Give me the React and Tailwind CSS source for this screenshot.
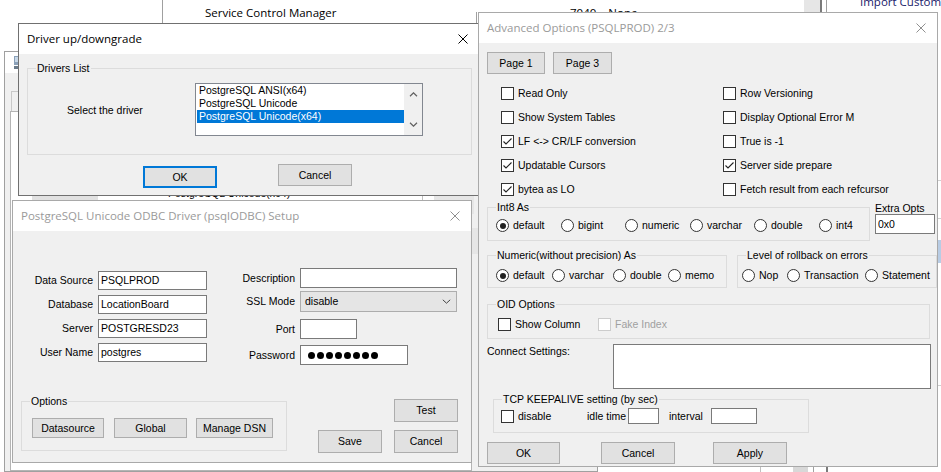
import React from "react";

function CloseX({ active }) {
  return (
    <svg width="10" height="10" viewBox="0 0 10 10" className="shrink-0">
      <path d="M0.5 0.5L9.5 9.5M9.5 0.5L0.5 9.5" stroke={active ? "#000000" : "#8f8f8f"} strokeWidth="1" fill="none" />
    </svg>
  );
}

function Win({ className, title, active, children }) {
  return (
    <div
      className={
        "absolute flex flex-col bg-[#f0f0f0] border " +
        (active ? "border-[#707070] " : "border-[#a9a9a9] ") +
        className
      }
    >
      <div className="h-[30px] shrink-0 bg-white flex items-center justify-between pl-[8px] pr-[11px]">
        <span
          className={
            "font-['Open_Sans',sans-serif] text-[11.5px] leading-[16px] whitespace-nowrap " +
            (active ? "text-black" : "text-[#9a9a9a]")
          }
        >
          {title}
        </span>
        <CloseX active={active} />
      </div>
      {children}
    </div>
  );
}

function Btn({ className, children, focus }) {
  return (
    <div
      className={
        "flex items-center justify-center bg-[#e1e1e1] shrink-0 whitespace-nowrap " +
        (focus ? "border-2 border-[#0078d7] " : "border border-[#adadad] ") +
        className
      }
    >
      {children}
    </div>
  );
}

function Group({ label, className, children }) {
  return (
    <div className={"relative border border-[#dcdcdc] shrink-0 " + className}>
      <span className="absolute top-[-7px] left-[8px] px-[1px] bg-[#f0f0f0] leading-[13px] whitespace-nowrap">
        {label}
      </span>
      {children}
    </div>
  );
}

function Check({ checked, disabled, label, className }) {
  return (
    <div className={"flex items-center h-[13px] shrink-0 " + (className || "")}>
      <div
        className={
          "w-[13px] h-[13px] bg-white border flex items-center justify-center shrink-0 " +
          (disabled ? "border-[#cccccc]" : "border-[#333333]")
        }
      >
        {checked && (
          <svg width="11" height="11" viewBox="0 0 11 11">
            <path d="M1.5 5.5L4 8L9.5 2.5" stroke="#222222" strokeWidth="1.1" fill="none" />
          </svg>
        )}
      </div>
      <span className={"ml-[4px] whitespace-nowrap " + (disabled ? "text-[#a0a0a0]" : "")}>{label}</span>
    </div>
  );
}

function Radio({ checked, label, className }) {
  return (
    <div className={"flex items-center h-[13px] shrink-0 " + (className || "")}>
      <div className="w-[13px] h-[13px] rounded-full bg-white border border-[#333333] flex items-center justify-center shrink-0">
        {checked && <div className="w-[6px] h-[6px] rounded-full bg-[#222222]" />}
      </div>
      <span className="ml-[4px] whitespace-nowrap">{label}</span>
    </div>
  );
}

function Edit({ className, children }) {
  return (
    <div className={"bg-white border border-[#7a7a7a] flex items-center pl-[2px] shrink-0 overflow-hidden whitespace-nowrap " + className}>
      {children}
    </div>
  );
}

function Chevron({ down }) {
  return (
    <svg width="9" height="5" viewBox="0 0 9 5">
      <path d={down ? "M1 0.8L4.5 4.2L8 0.8" : "M1 4.2L4.5 0.8L8 4.2"} stroke="#606060" strokeWidth="1.2" fill="none" />
    </svg>
  );
}

function Background() {
  return (
    <>
      <div className="absolute left-[162px] top-0 h-[24px] w-px bg-[#a0a0a0]" />
      <div className="absolute left-[205px] top-[5px] font-['Open_Sans',sans-serif] text-[11.5px] leading-[16px] text-black whitespace-nowrap">
        Service Control Manager
      </div>
      <div className="absolute left-[570px] top-[5px] font-['Open_Sans',sans-serif] text-[11.5px] leading-[16px] text-black flex gap-[12px] whitespace-nowrap">
        <span>7040</span>
        <span>None</span>
      </div>
      <div className="absolute left-[476px] top-[12px] h-[12px] w-px bg-[#a0a0a0]" />
      <div className="absolute left-[804px] top-0 h-[12px] w-[16px] bg-[#e6e6e6]" />
      <div className="absolute left-[820px] top-0 h-[12px] w-[2px] bg-[#7a7a7a]" />
      <div className="absolute left-[826px] top-0 h-[12px] w-px bg-[#a0a0a0]" />
      <div className="absolute left-[860px] top-[-6px] font-['Open_Sans',sans-serif] text-[11.5px] leading-[16px] text-[#1a1a6a] whitespace-nowrap">
        Import Custom
      </div>

      <div className="absolute left-[4px] top-[51px] w-[594px] h-[421px] border border-[#a0a0a0] bg-[#f0f0f0] flex flex-col">
        <div className="h-[21px] bg-white flex items-center pl-[9px] shrink-0">
          <svg width="7" height="13" viewBox="0 0 7 13">
            <rect x="0" y="0" width="7" height="9" fill="#8aa0b8" />
            <rect x="1" y="1" width="5" height="5" fill="#c8d8e8" />
            <rect x="0" y="10" width="7" height="3" fill="#6a7a8a" />
          </svg>
        </div>
        <div className="flex flex-col pl-[6px] pt-[18px]">
          <div className="w-[60px] h-[20px] border-t border-l border-[#c8c8c8]" />
          <div className="ml-[-1px] w-[462px] h-[360px] bg-white border border-[#b4b4b4] flex flex-col">
            <div className="mt-[76px] flex items-start">
              <div className="ml-[21px] w-[66px] h-[26px] bg-[#e1e1e1] shrink-0" />
              <div className="ml-[70px] mt-[-1px] text-black whitespace-nowrap">PostgreSQL Unicode(x64)</div>
              <div className="ml-[132px] w-px h-[26px] bg-[#c0c0c0] shrink-0" />
              <div className="ml-[11px] w-[40px] h-[26px] bg-[#e6e6e6] shrink-0" />
            </div>
            <div className="mt-[14px] ml-[459px] w-[8px] h-[26px] bg-[#e6e6e6]" />
          </div>
        </div>
      </div>

      <div className="absolute left-[938px] top-[240px] w-[3px] h-[23px] bg-[#b8cce4]" />
      <div className="absolute left-[938px] top-[180px] w-[3px] h-px bg-[#d0d0d0]" />
      <div className="absolute left-[938px] top-[218px] w-[3px] h-px bg-[#d0d0d0]" />
      <div className="absolute left-[938px] top-[385px] w-[3px] h-px bg-[#d0d0d0]" />
      <div className="absolute left-[760px] top-[466px] w-px h-[6px] bg-[#c0c0c0]" />
      <div className="absolute left-[793px] top-[466px] w-[15px] h-[6px] bg-[#d8d8d8]" />
      <div className="absolute left-[813px] top-[466px] w-px h-[6px] bg-[#a0a0a0]" />
      <div className="absolute left-[826px] top-[466px] w-[2px] h-[6px] bg-[#7a7a7a]" />
    </>
  );
}

function DriverDialog() {
  return (
    <Win className="left-[18px] top-[23px] w-[462px] h-[173px]" title="Driver up/downgrade" active>
      <div className="flex flex-col pl-[8px] pt-[14px]">
        <Group label="Drivers List" className="w-[445px] h-[87px]">
          <div className="flex">
            <div className="w-[167px] pl-[39px] pt-[35px] leading-[13px] whitespace-nowrap">Select the driver</div>
            <div className="mt-[14px] w-[228px] h-[53px] border border-[#828790] bg-white flex">
              <div className="flex-1 flex flex-col pl-px">
                <div className="h-[13px] pl-[2px] leading-[13px]">PostgreSQL ANSI(x64)</div>
                <div className="h-[13px] pl-[2px] leading-[13px]">PostgreSQL Unicode</div>
                <div className="h-[13px] pl-[2px] leading-[13px] bg-[#0078d7] text-white">PostgreSQL Unicode(x64)</div>
              </div>
              <div className="w-[18px] bg-[#f0f0f0] flex flex-col justify-between items-center py-[8px]">
                <Chevron />
                <Chevron down />
              </div>
            </div>
          </div>
        </Group>
        <div className="flex items-start mt-[9px] ml-[116px]">
          <Btn focus className="mt-[2px] w-[74px] h-[22px]">OK</Btn>
          <Btn className="ml-[61px] w-[74px] h-[22px]">Cancel</Btn>
        </div>
      </div>
    </Win>
  );
}

function SetupDialog() {
  const left = [
    ["Data Source", "PSQLPROD"],
    ["Database", "LocationBoard"],
    ["Server", "POSTGRESD23"],
    ["User Name", "postgres"],
  ];
  return (
    <Win className="left-[12px] top-[200px] w-[460px] h-[263px]" title="PostgreSQL Unicode ODBC Driver (psqlODBC) Setup">
      <div className="flex flex-col">
        <div className="flex">
          <div className="flex flex-col gap-[5px] pt-[40px]">
            {left.map(([l, v]) => (
              <div key={l} className="flex items-center h-[19px]">
                <div className="w-[80px] mr-[5px] text-right whitespace-nowrap">{l}</div>
                <Edit className="w-[109px] h-[19px]">{v}</Edit>
              </div>
            ))}
          </div>
          <div className="flex flex-col pt-[37px]">
            <div className="flex items-center h-[20px]">
              <div className="w-[88px] mr-[5px] text-right">Description</div>
              <Edit className="w-[157px] h-[20px]" />
            </div>
            <div className="flex items-center h-[21px] mt-[3px]">
              <div className="w-[88px] mr-[5px] text-right">SSL Mode</div>
              <div className="w-[157px] h-[21px] bg-[#e5e5e5] border border-[#adadad] flex items-center justify-between pl-[4px] pr-[5px]">
                <span>disable</span>
                <svg width="9" height="5" viewBox="0 0 9 5">
                  <path d="M0.8 0.8L4.5 4.2L8.2 0.8" stroke="#444444" strokeWidth="1" fill="none" />
                </svg>
              </div>
            </div>
            <div className="flex items-center h-[20px] mt-[7px]">
              <div className="w-[88px] mr-[5px] text-right">Port</div>
              <Edit className="w-[57px] h-[20px]" />
            </div>
            <div className="flex items-center h-[20px] mt-[6px]">
              <div className="w-[88px] mr-[5px] text-right">Password</div>
              <Edit className="w-[108px] h-[20px] pl-[7px] gap-[2px]">
                {[0, 1, 2, 3, 4, 5, 6, 7].map((i) => (
                  <div key={i} className="w-[7px] h-[7px] rounded-full bg-black shrink-0" />
                ))}
              </Edit>
            </div>
          </div>
        </div>
        <div className="flex items-start pl-[8px] mt-[34px]">
          <Group label="Options" className="mt-[2px] w-[266px] h-[50px]">
            <div className="flex pt-[16px] pl-[10px]">
              <Btn className="w-[72px] h-[20px]">Datasource</Btn>
              <Btn className="ml-[10px] w-[73px] h-[20px]">Global</Btn>
              <Btn className="ml-[9px] w-[77px] h-[20px]">Manage DSN</Btn>
            </div>
          </Group>
          <div className="ml-[31px] flex flex-col items-end">
            <Btn className="w-[64px] h-[23px]">Test</Btn>
            <div className="flex gap-[12px] mt-[8px]">
              <Btn className="w-[64px] h-[23px]">Save</Btn>
              <Btn className="w-[64px] h-[23px]">Cancel</Btn>
            </div>
          </div>
        </div>
      </div>
    </Win>
  );
}

function AdvancedDialog() {
  const rows = [
    [{ l: "Read Only" }, { l: "Row Versioning" }],
    [{ l: "Show System Tables" }, { l: "Display Optional Error M" }],
    [{ l: "LF <-> CR/LF conversion", c: true }, { l: "True is -1" }],
    [{ l: "Updatable Cursors", c: true }, { l: "Server side prepare", c: true }],
    [{ l: "bytea as LO", c: true }, { l: "Fetch result from each refcursor" }],
  ];
  return (
    <Win className="left-[478px] top-[12px] w-[460px] h-[455px]" title="Advanced Options (PSQLPROD) 2/3">
      <div className="flex flex-col">
        <div className="flex mt-[9px] pl-[8px]">
          <Btn className="w-[58px] h-[22px]">Page 1</Btn>
          <Btn className="ml-[8px] w-[59px] h-[22px]">Page 3</Btn>
        </div>
        <div className="grid grid-cols-[222px_1fr] mt-[7px] pl-[22px]">
          {rows.flat().map((r) => (
            <div key={r.l} className="h-[24px] flex items-center">
              <Check label={r.l} checked={r.c} />
            </div>
          ))}
        </div>
        <div className="flex items-start pl-[8px] mt-[2px]">
          <Group label="Int8 As" className="mt-[4px] w-[383px] h-[34px]">
            <div className="flex pt-[11px] pl-[8px]">
              <Radio checked label="default" className="w-[65px]" />
              <Radio label="bigint" className="w-[64px]" />
              <Radio label="numeric" className="w-[65px]" />
              <Radio label="varchar" className="w-[64px]" />
              <Radio label="double" className="w-[65px]" />
              <Radio label="int4" />
            </div>
          </Group>
          <div className="ml-[5px] flex flex-col">
            <div className="h-[11px] leading-[11px] whitespace-nowrap">Extra Opts</div>
            <Edit className="w-[60px] h-[20px]">0x0</Edit>
          </div>
        </div>
        <div className="flex pl-[8px] gap-[10px] mt-[14px]">
          <Group label="Numeric(without precision) As" className="w-[240px] h-[33px]">
            <div className="flex pt-[13px] pl-[8px]">
              <Radio checked label="default" className="w-[56px]" />
              <Radio label="varchar" className="w-[61px]" />
              <Radio label="double" className="w-[55px]" />
              <Radio label="memo" />
            </div>
          </Group>
          <Group label="Level of rollback on errors" className="w-[200px] h-[33px]">
            <div className="flex pt-[13px] pl-[4px]">
              <Radio label="Nop" className="w-[45px]" />
              <Radio label="Transaction" className="w-[78px]" />
              <Radio label="Statement" />
            </div>
          </Group>
        </div>
        <div className="pl-[8px] mt-[16px]">
          <Group label="OID Options" className="w-[443px] h-[35px]">
            <div className="flex pt-[13px] pl-[10px]">
              <Check label="Show Column" className="w-[100px]" />
              <Check label="Fake Index" disabled />
            </div>
          </Group>
        </div>
        <div className="flex pl-[8px] mt-[5px]">
          <div className="w-[126px] pt-px whitespace-nowrap">Connect Settings:</div>
          <Edit className="w-[318px] h-[45px]" />
        </div>
        <div className="pl-[14px] mt-[10px]">
          <Group label="TCP KEEPALIVE setting (by sec)" className="w-[316px] h-[34px]">
            <div className="mt-[8px] h-[16px] flex items-center pl-[7px]">
              <Check label="disable" className="w-[86px]" />
              <div className="w-[41px] whitespace-nowrap">idle time</div>
              <Edit className="w-[31px] h-[16px]" />
              <div className="ml-[10px] w-[42px] whitespace-nowrap">interval</div>
              <Edit className="w-[46px] h-[16px]" />
            </div>
          </Group>
        </div>
        <div className="flex pl-[8px] mt-[9px]">
          <Btn className="w-[73px] h-[22px]">OK</Btn>
          <Btn className="ml-[41px] w-[74px] h-[22px]">Cancel</Btn>
          <Btn className="ml-[38px] w-[74px] h-[22px]">Apply</Btn>
        </div>
      </div>
    </Win>
  );
}

export default function App() {
  return (
    <div className="relative w-[941px] h-[472px] overflow-hidden bg-white font-['Liberation_Sans',Arial,sans-serif] text-[10.5px] leading-[13px] text-black">
      <Background />
      <DriverDialog />
      <SetupDialog />
      <AdvancedDialog />
    </div>
  );
}
